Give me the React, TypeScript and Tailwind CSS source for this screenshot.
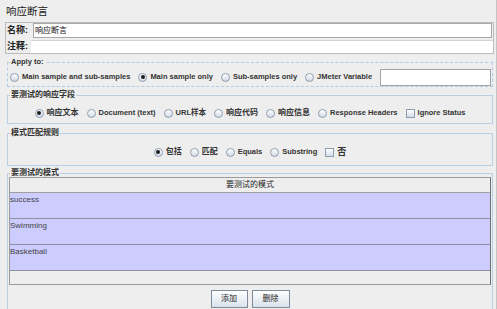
import React from 'react';

const FONT = "font-['Liberation_Sans','Noto_Sans_CJK_SC',sans-serif]";

interface RadioProps {
  label: string;
  checked?: boolean;
  cjk?: boolean;
}

function Radio({ label, checked, cjk }: RadioProps) {
  return (
    <div className="flex items-center gap-[3px] shrink-0">
      <span className="w-[9px] h-[9px] rounded-full border border-[#8f9db0] bg-linear-to-b from-white to-[#d3dbe6] flex items-center justify-center">
        {checked && <span className="w-[4px] h-[4px] rounded-full bg-[#1c1c1c]" />}
      </span>
      <span className={`${cjk ? 'text-[8px]' : 'text-[7.5px]'} font-bold text-[#333] leading-none whitespace-nowrap`}>
        {label}
      </span>
    </div>
  );
}

function Check({ label, cjk }: { label: string; cjk?: boolean }) {
  return (
    <div className="flex items-center gap-[3px] shrink-0">
      <span className="w-[9px] h-[9px] border border-[#8f9db0] bg-linear-to-b from-white to-[#d3dbe6]" />
      <span className={`${cjk ? 'text-[9px]' : 'text-[7.5px]'} font-bold text-[#333] leading-none whitespace-nowrap`}>
        {label}
      </span>
    </div>
  );
}

function Legend({ children, cjk }: { children: React.ReactNode; cjk?: boolean }) {
  return (
    <legend
      className={`ml-[2px] px-[1px] ${cjk ? 'text-[8px]' : 'text-[7.5px]'} font-bold text-[#333] leading-[10px]`}
    >
      {children}
    </legend>
  );
}

const rows = ['success', 'Swimming', 'Basketball'];

export default function App() {
  return (
    <div className={`w-[497px] h-[309px] bg-[#eeeeee] overflow-hidden border-r border-[#c4c4c4] ${FONT}`}>
      {/* Title */}
      <div className="h-[22px] flex items-center pl-[6px] pt-[2px] text-[10.5px] text-[#222]">响应断言</div>

      {/* Name / comment panel */}
      <div className="ml-[5px] w-[489px] border border-[#bcbcbc] flex flex-col gap-[2px]">
        <div className="flex items-center h-[15px]">
          <span className="w-[27px] pl-[1px] text-[9px] text-[#222] font-bold">名称:</span>
          <div className="flex-1 h-[15px] mr-[1px] bg-white border border-[#a8a8a8] flex items-center pl-[1px] text-[8px] text-[#111]">
            响应断言
          </div>
        </div>
        <div className="flex items-center h-[13px]">
          <span className="w-[25px] pl-[1px] text-[9px] text-[#222] font-bold">注释:</span>
          <div className="flex-1 h-[13px] bg-white border-t border-[#d4d4d4]" />
        </div>
      </div>

      {/* Apply to */}
      <fieldset className="ml-[7px] mt-[3px] w-[486px] border border-dashed border-[#b4cbe2]">
        <Legend>Apply to:</Legend>
        <div className="flex items-center gap-[8px] pl-[2px] pt-[1px] h-[19px]">
          <Radio label="Main sample and sub-samples" />
          <Radio label="Main sample only" checked />
          <Radio label="Sub-samples only" />
          <Radio label="JMeter Variable" />
          <div className="ml-auto mr-[1px] w-[111px] h-[17px] bg-white border border-[#a4a4a4]" />
        </div>
      </fieldset>

      {/* Response field */}
      <fieldset className="ml-[7px] mt-[3px] w-[486px] border border-[#b8cfe5]">
        <Legend cjk>要测试的响应字段</Legend>
        <div className="flex items-center justify-center gap-[8px] pt-[7px] pb-[4px] h-[23px]">
          <Radio label="响应文本" checked cjk />
          <Radio label="Document (text)" />
          <Radio label="URL样本" />
          <Radio label="响应代码" cjk />
          <Radio label="响应信息" cjk />
          <Radio label="Response Headers" />
          <Check label="Ignore Status" />
        </div>
      </fieldset>

      {/* Pattern matching rules */}
      <fieldset className="ml-[7px] mt-[4px] w-[486px] border border-[#b8cfe5]">
        <Legend cjk>模式匹配规则</Legend>
        <div className="flex items-center justify-center gap-[8px] pt-[8px] pb-[7px] h-[27px]">
          <Radio label="包括" checked cjk />
          <Radio label="匹配" cjk />
          <Radio label="Equals" />
          <Radio label="Substring" />
          <Check label="否" cjk />
        </div>
      </fieldset>

      {/* Patterns to test */}
      <fieldset className="ml-[7px] mt-[2px] w-[486px] h-[160px] border border-[#b8cfe5]">
        <Legend cjk>要测试的模式</Legend>
        <div className="px-[1px] -mt-px flex flex-col">
          <div className="h-[108px] border border-[#9a9a9a] border-r-[#6e6e6e] bg-[#eeeeee] flex flex-col">
            <div className="h-[15px] shrink-0 border-b border-[#a0a0a0] flex items-center justify-center text-[8px] text-[#222]">
              要测试的模式
            </div>
            {rows.map((r) => (
              <div
                key={r}
                className="h-[26px] shrink-0 bg-[#ccccff] border-b border-[#8f8fa8] text-[8px] text-[#444] leading-[11px] pt-[1px]"
              >
                {r}
              </div>
            ))}
          </div>
          <div className="flex justify-center gap-[4px] mt-[5px]">
            <button className="w-[37px] h-[18px] border border-[#7d8b9a] bg-linear-to-b from-white to-[#d8e2ec] text-[8px] text-[#222]">
              添加
            </button>
            <button className="w-[38px] h-[18px] border border-[#7d8b9a] bg-linear-to-b from-white to-[#d8e2ec] text-[8px] text-[#222]">
              删除
            </button>
          </div>
        </div>
      </fieldset>
    </div>
  );
}
